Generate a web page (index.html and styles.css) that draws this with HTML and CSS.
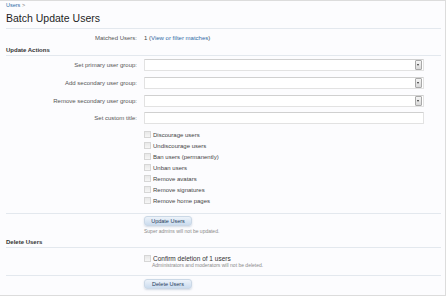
FILE: index.html
```html
<!DOCTYPE html>
<html lang="en">
<head>
    <meta charset="UTF-8">
    <title>Batch Update Users</title>
    <link rel="stylesheet" href="styles.css">
</head>
<body>
<div class="page">
    <div class="breadcrumb"><a href="#">Users</a> &gt;</div>
    <h1 class="title">Batch Update Users</h1>

    <div class="row info">
        <div class="label">Matched Users:</div>
        <div class="control">1 (<a href="#">View or filter matches</a>)</div>
    </div>

    <h2 class="section">Update Actions</h2>

    <div class="row field">
        <div class="label">Set primary user group:</div>
        <div class="control"><div class="select"><span class="arrow"></span></div></div>
    </div>
    <div class="row field">
        <div class="label">Add secondary user group:</div>
        <div class="control"><div class="select"><span class="arrow"></span></div></div>
    </div>
    <div class="row field">
        <div class="label">Remove secondary user group:</div>
        <div class="control"><div class="select"><span class="arrow"></span></div></div>
    </div>
    <div class="row field text">
        <div class="label">Set custom title:</div>
        <div class="control"><div class="text-input"></div></div>
    </div>

    <div class="row checks">
        <div class="label"></div>
        <ul class="control check-list">
            <li><span class="box"></span>Discourage users</li>
            <li><span class="box"></span>Undiscourage users</li>
            <li><span class="box"></span>Ban users (permanently)</li>
            <li><span class="box"></span>Unban users</li>
            <li><span class="box"></span>Remove avatars</li>
            <li><span class="box"></span>Remove signatures</li>
            <li><span class="box"></span>Remove home pages</li>
        </ul>
    </div>

    <div class="row submit">
        <div class="label"></div>
        <div class="control">
            <span class="button">Update Users</span>
            <p class="hint">Super admins will not be updated.</p>
        </div>
    </div>

    <h2 class="section">Delete Users</h2>

    <div class="row confirm">
        <div class="label"></div>
        <div class="control">
            <div class="check"><span class="box"></span>Confirm deletion of 1 users</div>
            <p class="hint">Administrators and moderators will not be deleted.</p>
        </div>
    </div>

    <div class="row submit last">
        <div class="label"></div>
        <div class="control">
            <span class="button">Delete Users</span>
        </div>
    </div>
</div>
</body>
</html>
```

FILE: styles.css
```css
:root {
    --rule: #e3e8ee;
    --label: #555;
    --link: #2f6aa6;
    --heading: #333;
}
body {
    margin: 0;
    background: #fff;
    font-family: "Liberation Sans", Arial, sans-serif;
    font-size: 6px;
    color: var(--heading);
}
.page {
    height: 296px;
    box-sizing: border-box;
    border-top: 1px solid #dcdcdc;
    border-right: 1px solid #dcdcdc;
    border-bottom: 1px solid #dcdcdc;
    background: #fcfcfe;
    padding: 0 4px 0 6px;
    overflow: hidden;
}
a {
    color: var(--link);
    text-decoration: none;
}
.breadcrumb {
    font-size: 5.5px;
    line-height: 7px;
    margin-top: 1px;
    color: #777;
}
.title {
    margin: 3px 0 0;
    font-size: 10.5px;
    line-height: 13px;
    font-weight: normal;
    color: #1e1e1e;
    padding-bottom: 3px;
    border-bottom: 1px solid var(--rule);
}
.row {
    display: grid;
    grid-template-columns: 131px 280px;
    column-gap: 7px;
}
.label {
    text-align: right;
    color: var(--label);
}
.control {
    color: var(--label);
}
.info {
    margin-top: 6px;
    line-height: 7px;
}
.info .control {
    color: #444;
}
.section {
    margin: 5px 0 0;
    font-size: 6px;
    font-weight: bold;
    line-height: 7px;
    color: var(--heading);
    padding-bottom: 1px;
    border-bottom: 1px solid var(--rule);
}
.field {
    align-items: center;
    margin-top: 3px;
}
.field + .field {
    margin-top: 6px;
}
.field.text {
    margin-top: 5px;
}
.select,
.text-input {
    height: 10px;
    background: #fff;
    border: 1px solid #e2e2e2;
    border-top-color: #d0d0d0;
    border-radius: 1px;
    display: flex;
    justify-content: flex-end;
    align-items: center;
    padding-right: 1px;
}
.arrow {
    width: 5px;
    height: 8px;
    border: 1px solid #a9a9a9;
    border-radius: 1px;
    background: linear-gradient(#f4f4f4, #d9d9d9);
    position: relative;
}
.arrow::after {
    content: "";
    position: absolute;
    left: 1px;
    top: 3px;
    border-left: 1.5px solid transparent;
    border-right: 1.5px solid transparent;
    border-top: 2px solid #333;
}
.checks {
    margin-top: 5px;
}
.check-list {
    list-style: none;
    margin: 0;
    padding: 0 0 7px;
}
.check-list li,
.check {
    display: flex;
    align-items: center;
    height: 11px;
    color: #444;
}
.box {
    width: 5px;
    height: 5px;
    border: 1px solid #d6d6d6;
    background: linear-gradient(#e8e8e8, #f6f6f6);
    margin-right: 2px;
    flex-shrink: 0;
}
.submit {
    border-top: 1px solid var(--rule);
    padding-top: 2px;
}
.button {
    display: inline-block;
    width: 46px;
    height: 8px;
    line-height: 8px;
    text-align: center;
    font-size: 5.5px;
    color: #1d3a5c;
    background: linear-gradient(#edf3fa, #cadbee);
    border: 1px solid #cbd8e6;
    border-radius: 3px;
    box-shadow: 0 1px 2px rgba(120, 140, 170, 0.3);
}
.hint {
    margin: 2px 0 0;
    font-size: 5px;
    line-height: 6px;
    color: #8a8a8a;
}
.confirm {
    margin-top: 6px;
}
.confirm .check {
    font-size: 6.5px;
    color: #333;
    height: 8px;
}
.confirm .hint {
    margin: 0 0 7px 8px;
}
.last {
    padding-top: 3px;
}
```
